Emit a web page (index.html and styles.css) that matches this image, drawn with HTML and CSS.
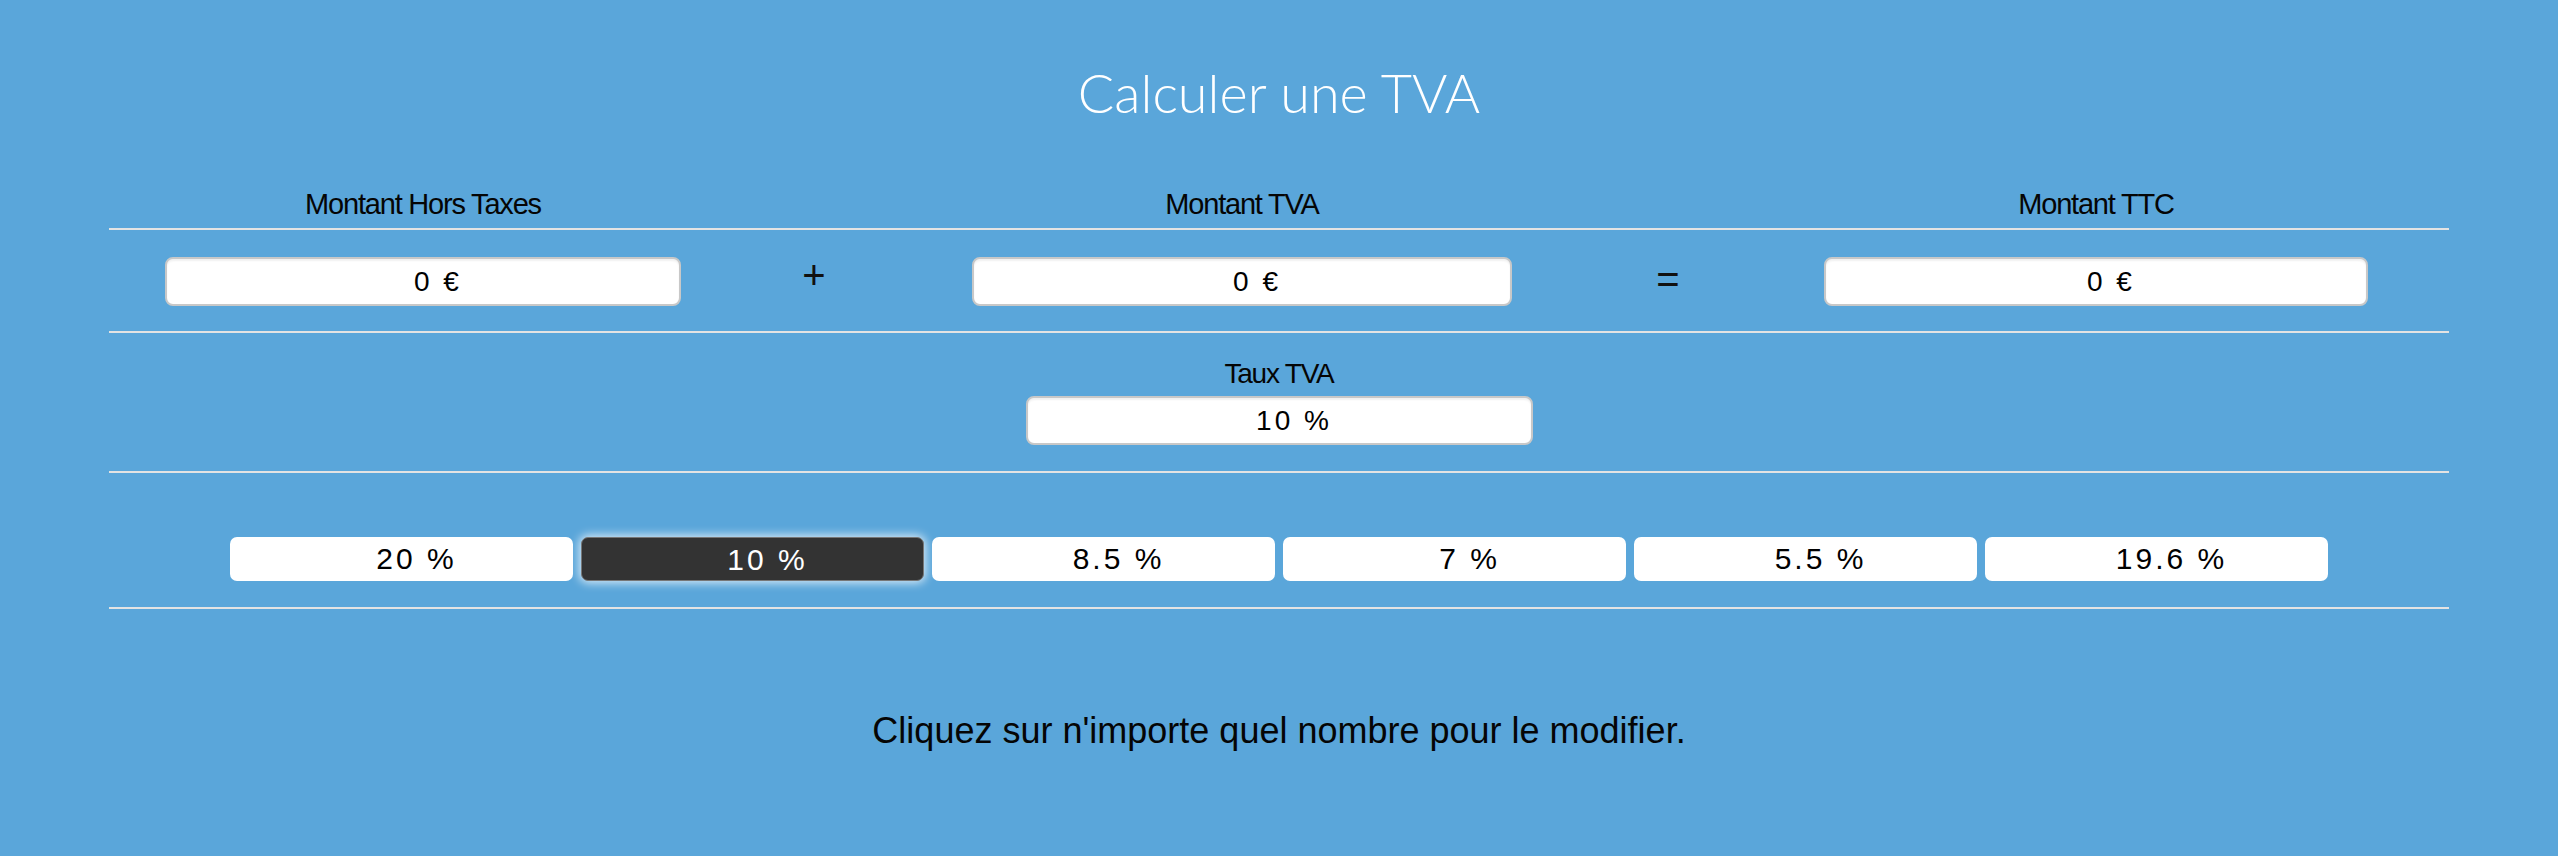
FILE: index.html
```html
<!DOCTYPE html>
<html lang="fr">
<head>
<meta charset="utf-8">
<title>Calculer une TVA</title>
<link rel="stylesheet" href="styles.css">
</head>
<body>
<main class="calc">
  <h1 class="title">Calculer une TVA</h1>

  <div class="grid labels">
    <div class="label">Montant Hors Taxes</div>
    <div></div>
    <div class="label">Montant TVA</div>
    <div></div>
    <div class="label">Montant TTC</div>
  </div>

  <div class="grid values">
    <div class="cell"><span class="field field-ht">0 €</span></div>
    <div class="op op-plus">+</div>
    <div class="cell"><span class="field field-wide">0 €</span></div>
    <div class="op op-eq">=</div>
    <div class="cell"><span class="field field-wide">0 €</span></div>
  </div>

  <div class="rate">
    <div class="label">Taux TVA</div>
    <span class="field field-rate">10 %</span>
  </div>

  <div class="presets">
    <button class="preset">20 %</button>
    <button class="preset active">10 %</button>
    <button class="preset">8.5 %</button>
    <button class="preset">7 %</button>
    <button class="preset">5.5 %</button>
    <button class="preset">19.6 %</button>
  </div>

  <p class="hint">Cliquez sur n'importe quel nombre pour le modifier.</p>
</main>
</body>
</html>
```

FILE: styles.css
```css
html, body {
  margin: 0;
  padding: 0;
}

body {
  background: #5aa6da;
  color: #000;
  font-family: "Liberation Sans", Arial, sans-serif;
  height: 856px;
  overflow: hidden;
}

.calc {
  width: calc(100% - 218px);
  margin: 0 auto;
  padding-top: 61px;
}

.title {
  margin: 0;
  font-family: Lato, "Open Sans", sans-serif;
  font-weight: 300;
  font-size: 54px;
  line-height: 64px;
  color: #fff;
  text-align: center;
}

.grid {
  display: grid;
  grid-template-columns: 628fr 154fr 702fr 150fr 706fr;
  align-items: center;
}

.labels {
  margin-top: 63px;
  padding-bottom: 8px;
  border-bottom: 2px solid #e3e3e3;
}

.label {
  font-size: 29px;
  line-height: 32px;
  letter-spacing: -1.2px;
  text-align: center;
  color: #050505;
}

.values {
  padding: 27px 0 25px;
  border-bottom: 2px solid #e3e3e3;
}

.cell {
  display: flex;
  justify-content: center;
}

.field {
  display: block;
  box-sizing: border-box;
  height: 49px;
  background: #fff;
  border: 2px solid #c8c8c8;
  border-radius: 8px;
  box-shadow: inset 0 2px 2px rgba(0, 0, 0, 0.06);
  font-size: 28px;
  line-height: 45px;
  letter-spacing: 3px;
  text-align: center;
  padding-left: 30px;
  color: #000;
}

.field-ht {
  width: 82.2%;
}

.field-wide {
  width: 77%;
}

.op {
  text-align: center;
  font-size: 40px;
  line-height: 40px;
  color: #111;
}

.op-plus {
  margin-top: -14px;
}

.op-eq {
  margin-top: -6px;
}

.rate {
  display: flex;
  flex-direction: column;
  align-items: center;
  padding: 25px 0 26px;
  border-bottom: 2px solid #e3e3e3;
}

.rate .label {
  font-size: 28px;
  letter-spacing: -1.2px;
  margin-bottom: 6px;
}

.field-rate {
  width: 507px;
}

.presets {
  display: flex;
  justify-content: center;
  gap: 8px;
  padding: 64px 0 26px;
  border-bottom: 2px solid #e3e3e3;
}

.preset {
  width: 343px;
  height: 44px;
  padding: 0 0 0 30px;
  border: none;
  border-radius: 7px;
  background: #fff;
  color: #000;
  font-family: "Liberation Sans", Arial, sans-serif;
  font-size: 30px;
  line-height: 44px;
  letter-spacing: 3px;
  text-align: center;
}

.preset.active {
  background: #333;
  color: #fff;
  border: 1px solid #777;
  box-shadow: 0 0 10px 2px rgba(255, 255, 255, 0.75);
}

.hint {
  margin: 100px 0 0;
  font-size: 36px;
  line-height: 44px;
  letter-spacing: 0;
  text-align: center;
  color: #050505;
}
```
